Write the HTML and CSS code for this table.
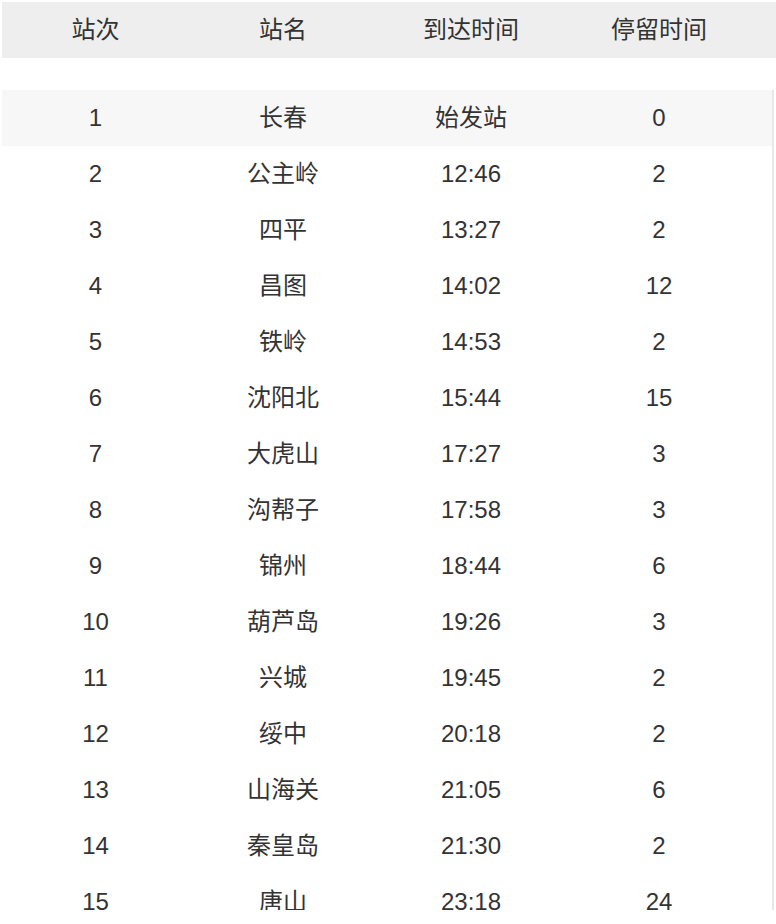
FILE: index.html
```html
<!DOCTYPE html>
<html lang="zh">
<head>
<meta charset="utf-8">
<title>停靠站</title>
<link rel="stylesheet" href="styles.css">
</head>
<body>
<div class="page">
  <div class="thead row">
    <div>站次</div><div>站名</div><div>到达时间</div><div>停留时间</div>
  </div>
  <div class="tbody">
    <div class="row first"><div>1</div><div>长春</div><div>始发站</div><div>0</div></div>
    <div class="row"><div>2</div><div>公主岭</div><div>12:46</div><div>2</div></div>
    <div class="row"><div>3</div><div>四平</div><div>13:27</div><div>2</div></div>
    <div class="row"><div>4</div><div>昌图</div><div>14:02</div><div>12</div></div>
    <div class="row"><div>5</div><div>铁岭</div><div>14:53</div><div>2</div></div>
    <div class="row"><div>6</div><div>沈阳北</div><div>15:44</div><div>15</div></div>
    <div class="row"><div>7</div><div>大虎山</div><div>17:27</div><div>3</div></div>
    <div class="row"><div>8</div><div>沟帮子</div><div>17:58</div><div>3</div></div>
    <div class="row"><div>9</div><div>锦州</div><div>18:44</div><div>6</div></div>
    <div class="row"><div>10</div><div>葫芦岛</div><div>19:26</div><div>3</div></div>
    <div class="row"><div>11</div><div>兴城</div><div>19:45</div><div>2</div></div>
    <div class="row"><div>12</div><div>绥中</div><div>20:18</div><div>2</div></div>
    <div class="row"><div>13</div><div>山海关</div><div>21:05</div><div>6</div></div>
    <div class="row"><div>14</div><div>秦皇岛</div><div>21:30</div><div>2</div></div>
    <div class="row"><div>15</div><div>唐山</div><div>23:18</div><div>24</div></div>
  </div>
</div>
</body>
</html>
```
FILE: styles.css
```css
html, body {
  margin: 0;
  padding: 0;
  background: #ffffff;
}
body {
  font-family: "Liberation Sans", Arial, "Noto Sans CJK SC", sans-serif;
  font-size: 24px;
  line-height: 28px;
  color: #333333;
}
.page {
  padding: 2px 0 0 2px;
}
.row {
  display: grid;
  grid-template-columns: 187px 188px 188px 188px;
  height: 56px;
  align-items: center;
  text-align: center;
}
.thead {
  background: #eeeeee;
  width: 774px;
  margin-bottom: 32px;
}
.tbody {
  width: 770px;
  height: 820px;
  overflow: hidden;
  border-right: 2px solid #e8e8e8;
}
.row.first {
  background: #f7f7f7;
}
```
